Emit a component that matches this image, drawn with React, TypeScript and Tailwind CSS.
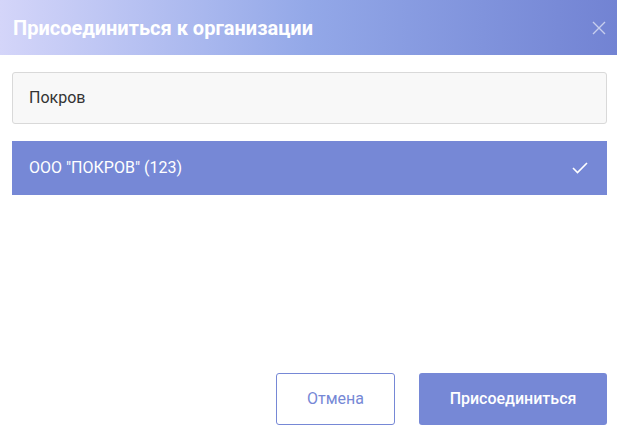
export default function App() {
  return (
    <div className="w-[617px] h-[439px] bg-white flex flex-col font-['Roboto',sans-serif]">
      {/* header */}
      <div className="h-[55px] shrink-0 flex items-center justify-between pl-[13px] pr-[11px] bg-gradient-to-r from-[#d4d5f9] via-[#93a8e8] to-[#7283d3]">
        <h1 className="text-[20px] font-bold text-white leading-none">Присоединиться к организации</h1>
        <svg className="w-[14px] h-[14px] text-white/60" viewBox="0 0 14 14" fill="none" stroke="currentColor" strokeWidth={1.4}>
          <path d="M1 1l12 12M13 1L1 13" />
        </svg>
      </div>

      {/* body */}
      <div className="flex-1 flex flex-col pl-3 pr-[10px] pt-[17px] pb-[14px]">
        <div className="h-[52px] rounded-[3px] border border-[#d9d9d9] bg-[#f8f8f8] flex items-center px-4 text-[16px] text-[#333]">
          Покров
        </div>

        <div className="mt-[17px] h-[54px] bg-[#7688d6] flex items-center justify-between pl-[17px] pr-[19px] text-[16px] text-white">
          <span>ООО "ПОКРОВ" (123)</span>
          <svg className="w-[16px] h-[12px]" viewBox="0 0 16 12" fill="none" stroke="currentColor" strokeWidth={1.6}>
            <path d="M1 6l4.5 4.5L15 1" />
          </svg>
        </div>

        <div className="mt-auto flex justify-end gap-6">
          <button className="w-[119px] h-[52px] rounded-[3px] border border-[#7688d6] text-[#7688d6] text-[16px]">
            Отмена
          </button>
          <button className="w-[188px] h-[52px] rounded-[3px] bg-[#7688d6] text-white text-[16px] font-medium">
            Присоединиться
          </button>
        </div>
      </div>
    </div>
  );
}
